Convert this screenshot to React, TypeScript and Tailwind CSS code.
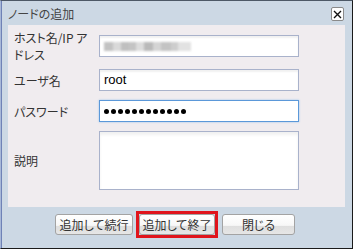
import React from "react";

const jp = "font-['Noto_Sans_CJK_JP','Noto_Sans',sans-serif] [font-feature-settings:'palt']";

function Field({ children }: { children: React.ReactNode }) {
  return <div className="flex items-center">{children}</div>;
}

function Label({ text }: { text: string }) {
  return (
    <div className={`w-[78px] mr-[7px] text-[12px] leading-[17px] text-[#333] ${jp}`}>
      {text}
    </div>
  );
}

const inputBox =
  "w-[200px] h-[22px] border border-[#a9b2cb] bg-white shadow-[inset_0_2px_2px_rgba(0,0,0,0.06)] flex items-center px-[4px]";

function Button({ label, width }: { label: string; width: string }) {
  return (
    <button
      className={`${width} h-[21px] rounded-[3px] border border-[#a3a3a3] bg-[linear-gradient(to_bottom,#ffffff_0%,#f7f7f7_55%,#dedede_57%,#e6e6e6_100%)] text-[12px] leading-none text-[#333] ${jp}`}
    >
      {label}
    </button>
  );
}

// Blurred host address, as it appears masked in the screenshot
const blur = ["#c2c2c2", "#d9d9d9", "#bfbfbf", "#c4c4c4", "#dcdcdc", "#b9b9b9", "#d4d4d4", "#c3c3c3", "#cdcdcd", "#e2e2e2"];
const blurW = [9, 8, 8, 7, 8, 9, 8, 10, 7, 13];

export default function App() {
  return (
    <div className="w-[353px] h-[249px] bg-[#ccd8e4] border-t border-t-[#4d5866] border-l border-l-[#a8b8d8] border-r border-r-[#1a1a1a] border-b border-b-[#1a1a1a] shadow-[inset_1px_0_0_#6f82b6] flex flex-col">
      <div className="h-[24px] flex items-center justify-between pl-[7px] pr-[8px]">
        <span className={`text-[12px] text-[#444] pt-[2px] ${jp}`}>ノードの追加</span>
        <div className="w-[13px] h-[14px] mt-[2px] bg-white border border-[#8a8a8a] rounded-[2px] flex items-center justify-center">
          <svg width="9" height="9" viewBox="0 0 9 9">
            <path d="M1 1L8 8M8 1L1 8" stroke="#111" strokeWidth="1.4" />
          </svg>
        </div>
      </div>

      <div className="ml-[7px] w-[337px] h-[182px] bg-[#f0ecef] pl-[6px] pt-[4px] flex flex-col">
        <Field>
          <Label text="ホスト名/IP アドレス" />
          <div className={inputBox}>
            <div className="flex items-center blur-[1px]">
              {blur.map((c, i) => (
                <div key={i} className="h-[9px]" style={{ width: blurW[i], background: c }} />
              ))}
            </div>
          </div>
        </Field>
        <div className="mt-[6px]">
          <Field>
            <Label text="ユーザ名" />
            <div className={inputBox}>
              <span className="font-['Liberation_Sans',sans-serif] text-[13px] text-black">root</span>
            </div>
          </Field>
        </div>
        <div className="mt-[9px]">
          <Field>
            <Label text="パスワード" />
            <div className="w-[200px] h-[22px] border border-[#5b98d9] bg-white shadow-[0_0_2px_#9cc3ec] flex items-center px-[4px] gap-[2px]">
              {Array.from({ length: 12 }).map((_, i) => (
                <span key={i} className="w-[5px] h-[5px] rounded-full bg-black" />
              ))}
            </div>
          </Field>
        </div>
        <div className="mt-[9px]">
          <Field>
            <Label text="説明" />
            <div className="w-[200px] h-[59px] border border-[#a9b2cb] bg-white shadow-[inset_0_3px_3px_rgba(0,0,0,0.06)]" />
          </Field>
        </div>
      </div>

      <div className="flex items-center pl-[54px] pt-[4px]">
        <Button label="追加して続行" width="w-[78px]" />
        <div className="ml-[3px] border-[3px] border-[#e0141c]">
          <Button label="追加して終了" width="w-[76px] block" />
        </div>
        <div className="ml-[4px]">
          <Button label="閉じる" width="w-[73px] block" />
        </div>
      </div>
    </div>
  );
}
